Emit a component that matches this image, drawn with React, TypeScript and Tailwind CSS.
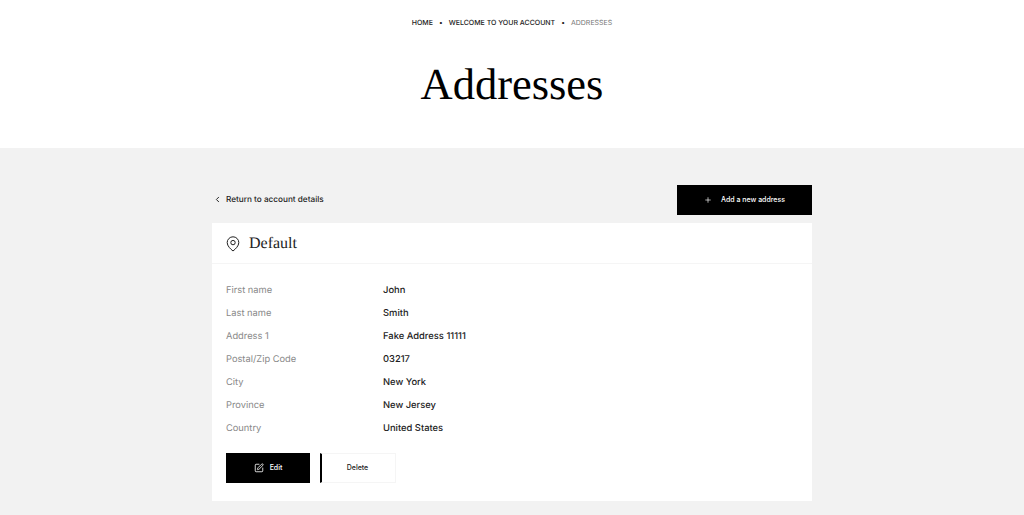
import { ChevronLeft, Plus, SquarePen } from "lucide-react";

const rows = [
  ["First name", "John"],
  ["Last name", "Smith"],
  ["Address 1", "Fake Address 11111"],
  ["Postal/Zip Code", "03217"],
  ["City", "New York"],
  ["Province", "New Jersey"],
  ["Country", "United States"],
];

function Pin() {
  return (
    <svg width="14" height="16" viewBox="0 0 14 16" fill="none" stroke="#222" strokeWidth="1">
      <path d="M7 15 C4.5 13 1.2 10 1.2 6.6 A5.8 5.8 0 0 1 12.8 6.6 C12.8 10 9.5 13 7 15 Z" />
      <circle cx="7" cy="6.6" r="2.2" />
    </svg>
  );
}

export default function App() {
  return (
    <div className="min-h-[515px] bg-[#f2f2f2] font-['Inter',sans-serif] overflow-hidden antialiased [text-rendering:geometricPrecision]">
      <header className="h-[148px] bg-white flex flex-col items-center">
        <nav className="mt-[18px] h-[10px] flex items-center text-[7px] leading-[10px] font-medium text-[#222] uppercase">
          <span>Home</span>
          <span className="mx-[6px]">•</span>
          <span>Welcome to your account</span>
          <span className="mx-[6px]">•</span>
          <span className="text-[#777] font-normal">Addresses</span>
        </nav>
        <h1 className="mt-[28px] font-['Liberation_Serif',serif] text-[44.5px] leading-[56px] text-black">Addresses</h1>
      </header>
      <main className="w-[600px] mx-auto pt-[37px] pb-[14px]">
        <div className="flex items-center justify-between h-[30px]">
          <a className="flex items-center text-[#222] text-[8.2px] leading-[10px] font-medium pb-[1px]">
            <ChevronLeft size={9} strokeWidth={2.6} className="ml-[1px] mr-[4px]" />
            <span className="mb-[1px]">Return to account details</span>
          </a>
          <button className="w-[135px] h-[30px] bg-black text-white flex items-center justify-center text-[7px] font-medium">
            <Plus size={8} strokeWidth={2} className="mr-[9px]" />
            Add a new address
          </button>
        </div>
        <section className="mt-[8px] bg-white">
          <div className="h-[41px] border-b border-[#f5f5f5] flex items-center pl-[14px] pt-[1px]">
            <Pin />
            <span className="ml-[9px] font-['Liberation_Serif',serif] text-[16px] text-[#222]">Default</span>
          </div>
          <div className="px-[14px] pt-[14px] pb-[18px]">
            <dl className="flex flex-col">
              {rows.map(([k, v]) => (
                <div key={k} className="flex items-center h-[23px] pt-[2px] text-[9.3px] leading-[12px]">
                  <dt className="w-[157px] text-[#888]">{k}</dt>
                  <dd className="text-[#222] font-medium text-[9.4px]">{v}</dd>
                </div>
              ))}
            </dl>
            <div className="flex mt-[14px]">
              <button className="w-[84px] h-[30px] bg-black text-white flex items-center justify-center text-[7px] font-medium">
                <SquarePen size={10} strokeWidth={2} className="mr-[6px]" />
                Edit
              </button>
              <button className="ml-[10px] w-[76px] h-[30px] bg-white border border-[#f5f5f5] border-l-2 border-l-black text-[#222] flex items-center justify-center text-[7px] font-medium pr-[2px]">
                Delete
              </button>
            </div>
          </div>
        </section>
      </main>
    </div>
  );
}
